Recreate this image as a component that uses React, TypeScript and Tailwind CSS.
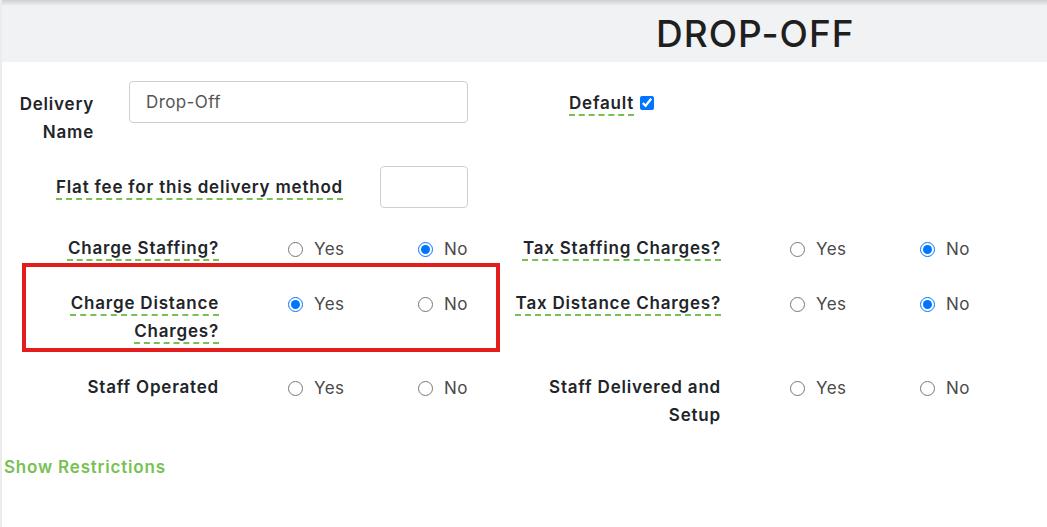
import React from "react";

const font = { fontFamily: "Inter, 'Noto Sans', sans-serif" };

const Tip: React.FC<{ children: React.ReactNode }> = ({ children }) => (
  <span className="underline decoration-dashed decoration-[#77c153] decoration-2 underline-offset-[5px]">
    {children}
  </span>
);

const Radio: React.FC<{ name: string; label: string; checked?: boolean }> = ({ name, label, checked }) => (
  <label className="flex w-[130px] shrink-0 items-center gap-[11px] text-[17px] tracking-[0.4px] text-[#4a4a4a]">
    <input type="radio" name={name} defaultChecked={checked} className="m-0 h-[15px] w-[15px] accent-[#0075ff]" />
    <span>{label}</span>
  </label>
);

const RadioRow: React.FC<{ name: string; label: React.ReactNode; yes?: boolean; className?: string }> = ({
  name,
  label,
  yes,
  className = "",
}) => (
  <div className={`flex shrink-0 items-start ${className}`}>
    <div className="w-[217px] shrink-0 whitespace-nowrap text-right text-[17px] font-semibold leading-[28px] tracking-[0.8px] text-[#212529]">
      {label}
    </div>
    <div className="ml-[69px] flex h-[28px] items-center pt-[3px]">
      <Radio name={name} label="Yes" checked={yes === true} />
      <Radio name={name} label="No" checked={yes === false} />
    </div>
  </div>
);

export default function App() {
  return (
    <div className="relative min-h-[527px] w-full border-l-2 border-[#ececec] bg-white" style={font}>
      <div className="h-[6px] bg-gradient-to-b from-[#cfcfcf] to-[#f1f2f4]" />
      <div className="flex h-[56px] items-center bg-[#f1f2f4] pl-[654px]">
        <h1 className="text-[37px] font-medium tracking-[1px] text-[#1f1f1f]">DROP-OFF</h1>
      </div>

      <div className="flex flex-col text-[#212529]">
        <div className="mt-[19px] flex items-start">
          <div className="flex w-[500px] shrink-0 items-start">
            <div className="mt-[9px] w-[92px] text-right text-[17px] font-semibold leading-[28px] tracking-[0.8px]">
              Delivery
              <br />
              Name
            </div>
            <input
              defaultValue="Drop-Off"
              className="ml-[35px] h-[42px] w-[339px] rounded-[4px] border border-[#cfcfcf] px-[16px] text-[17px] tracking-[0.4px] text-[#555]"
            />
          </div>
          <div className="ml-[67px] mt-[10px] flex items-start gap-[6px] text-[17px] font-semibold tracking-[0.8px]">
            <Tip>Default</Tip>
            <input type="checkbox" defaultChecked className="m-0 mt-[5px] h-[14px] w-[14px] accent-[#0075ff]" />
          </div>
        </div>

        <div className="mt-[20px] flex items-center">
          <div className="w-[341px] whitespace-nowrap text-right text-[17px] font-semibold leading-[28px] tracking-[0.8px]">
            <Tip>Flat fee for this delivery method</Tip>
          </div>
          <input className="ml-[37px] h-[42px] w-[88px] rounded-[4px] border border-[#cfcfcf]" />
        </div>

        <div className="mt-[26px] flex">
          <RadioRow name="cs" label={<Tip>Charge Staffing?</Tip>} yes={false} className="w-[502px]" />
          <RadioRow name="ts" label={<Tip>Tax Staffing Charges?</Tip>} yes={false} />
        </div>

        <div className="mt-[27px] flex">
          <RadioRow
            name="cd"
            label={
              <>
                <Tip>Charge Distance</Tip>
                <br />
                <Tip>Charges?</Tip>
              </>
            }
            yes={true}
            className="w-[502px]"
          />
          <RadioRow name="td" label={<Tip>Tax Distance Charges?</Tip>} yes={false} />
        </div>

        <div className="mt-[28px] flex">
          <RadioRow name="so" label="Staff Operated" className="w-[502px]" />
          <RadioRow
            name="sd"
            label={
              <>
                Staff Delivered and
                <br />
                Setup
              </>
            }
          />
        </div>

        <div className="mt-[24px] pl-[2px] text-[17px] font-semibold leading-[28px] tracking-[0.8px] text-[#77c153]">
          Show Restrictions
        </div>
      </div>

      <div className="pointer-events-none absolute left-[20px] top-[263px] h-[89px] w-[478px] border-4 border-[#e31c1c]" />
    </div>
  );
}
